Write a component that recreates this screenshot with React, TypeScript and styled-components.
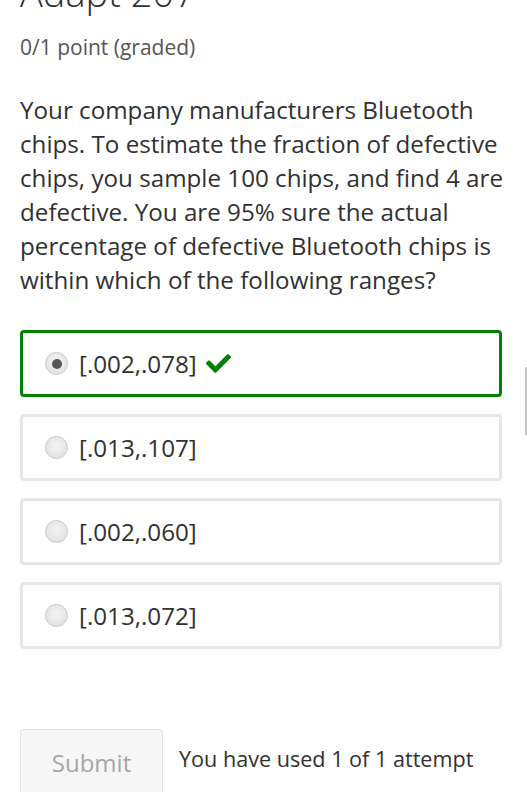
import styled, { createGlobalStyle } from "styled-components";
import { FaCheck } from "react-icons/fa";

const GlobalStyle = createGlobalStyle`
  html, body {
    margin: 0;
    padding: 0;
    background: #fff;
    font-family: "Open Sans", "Noto Sans", sans-serif;
    color: #313131;
    overflow: hidden;
  }
`;

const options = [
  { id: "a", label: "[.002,.078]", checked: true },
  { id: "b", label: "[.013,.107]", checked: false },
  { id: "c", label: "[.002,.060]", checked: false },
  { id: "d", label: "[.013,.072]", checked: false },
];

const App = () => {
  return (
    <>
      <GlobalStyle />
      <Page>
        <Title>Adapt 207</Title>
        <Points>0/1 point (graded)</Points>
        <Question>
          Your company manufacturers Bluetooth chips. To estimate the fraction
          of defective chips, you sample 100 chips, and find 4 are defective.
          You are 95% sure the actual percentage of defective Bluetooth chips is
          within which of the following ranges?
        </Question>
        <Choices>
          {options.map((opt) => (
            <Choice key={opt.id} $correct={opt.checked}>
              <Radio $checked={opt.checked} />
              <ChoiceLabel>{opt.label}</ChoiceLabel>
              {opt.checked && (
                <CheckMark>
                  <FaCheck />
                </CheckMark>
              )}
            </Choice>
          ))}
        </Choices>
        <ActionRow>
          <SubmitButton disabled>Submit</SubmitButton>
          <Attempts>You have used 1 of 1 attempt</Attempts>
        </ActionRow>
      </Page>
      <ScrollHint />
    </>
  );
};

export default App;

const Page = styled.div`
  padding: 0 18px 0 20px;
  box-sizing: border-box;
  width: 527px;
`;

const Title = styled.h2`
  margin: -29px 0 0;
  font-size: 38px;
  font-weight: 300;
  line-height: 42px;
  color: #313131;
`;

const Points = styled.div`
  margin-top: 21px;
  font-size: 21px;
  line-height: 26px;
  color: #555;
`;

const Question = styled.p`
  margin: 33px 0 0;
  font-size: 24.2px;
  line-height: 34px;
  color: #313131;
`;

const Choices = styled.div`
  margin: 33px 7px 0 0;
  display: flex;
  flex-direction: column;
  gap: 17px;
`;

const Choice = styled.label<{ $correct: boolean }>`
  display: flex;
  align-items: center;
  height: 67px;
  box-sizing: border-box;
  padding-left: 22px;
  border: 3px solid ${(p) => (p.$correct ? "#008100" : "#e6e6e6")};
  border-radius: 4px;
  background: #fff;
`;

const Radio = styled.span<{ $checked: boolean }>`
  width: 23px;
  height: 23px;
  border-radius: 50%;
  box-sizing: border-box;
  border: 1px solid #c8c8c8;
  background: radial-gradient(circle at 50% 40%, #f4f4f4 0%, #dcdcdc 100%);
  display: flex;
  align-items: center;
  justify-content: center;

  &::after {
    content: "";
    display: ${(p) => (p.$checked ? "block" : "none")};
    width: 10px;
    height: 10px;
    border-radius: 50%;
    background: #555;
  }
`;

const ChoiceLabel = styled.span`
  margin-left: 11px;
  font-size: 24.2px;
  color: #313131;
`;

const CheckMark = styled.span`
  margin-left: 9px;
  display: flex;
  color: #008100;
  font-size: 25px;
`;

const ActionRow = styled.div`
  margin-top: 80px;
  display: flex;
  align-items: flex-start;
  gap: 16px;
`;

const SubmitButton = styled.button`
  width: 143px;
  height: 75px;
  box-sizing: border-box;
  border: 1px solid #e4e4e4;
  border-radius: 3px;
  background: #f6f6f6;
  color: #a6a6a6;
  font-family: "Open Sans", "Noto Sans", sans-serif;
  font-size: 24px;
  padding: 0 0 8px;
`;

const Attempts = styled.span`
  margin-top: 15px;
  font-size: 21.6px;
  color: #313131;
`;

const ScrollHint = styled.div`
  position: absolute;
  top: 367px;
  left: 525px;
  width: 2px;
  height: 68px;
  background: #c4c4c4;
`;
